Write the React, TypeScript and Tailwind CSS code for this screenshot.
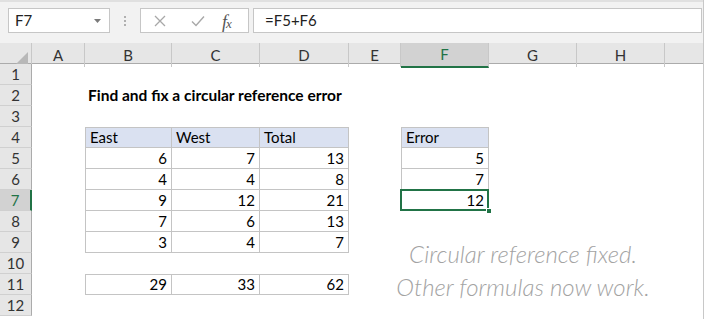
import React from 'react';

const colNames = ['A', 'B', 'C', 'D', 'E', 'F', 'G', 'H', ''];
const gridCols = 'grid grid-cols-[32px_53px_87px_88px_89px_52px_88px_88px_88px_1fr]';

type Cell = { v: string; head?: boolean; num?: boolean; left?: boolean; top?: boolean; sel?: boolean };

// sheet content keyed by row, then column index (0 = A)
const sheet: Record<number, Record<number, Cell>> = {
  4: {
    1: { v: 'East', head: true, left: true, top: true },
    2: { v: 'West', head: true, top: true },
    3: { v: 'Total', head: true, top: true },
    5: { v: 'Error', head: true, left: true, top: true },
  },
  5: { 1: { v: '6', num: true, left: true }, 2: { v: '7', num: true }, 3: { v: '13', num: true }, 5: { v: '5', num: true, left: true } },
  6: { 1: { v: '4', num: true, left: true }, 2: { v: '4', num: true }, 3: { v: '8', num: true }, 5: { v: '7', num: true, left: true } },
  7: { 1: { v: '9', num: true, left: true }, 2: { v: '12', num: true }, 3: { v: '21', num: true }, 5: { v: '12', num: true, left: true, sel: true } },
  8: { 1: { v: '7', num: true, left: true }, 2: { v: '6', num: true }, 3: { v: '13', num: true } },
  9: { 1: { v: '3', num: true, left: true }, 2: { v: '4', num: true }, 3: { v: '7', num: true } },
  11: {
    1: { v: '29', num: true, left: true, top: true },
    2: { v: '33', num: true, top: true },
    3: { v: '62', num: true, top: true },
  },
};

function SheetCell({ cell }: { cell?: Cell }) {
  if (!cell) return <div />;
  return (
    <div
      className={`relative flex items-center px-[4px] border-r border-b border-[#c4c4c4] ${cell.left ? 'border-l' : ''} ${
        cell.top ? 'border-t' : ''
      } ${cell.head ? 'bg-[#dae1f1]' : ''} ${cell.num ? 'justify-end' : ''}`}
    >
      <span className="leading-none">{cell.v}</span>
      {cell.sel && (
        <>
          <div className="absolute -left-[2px] -top-[1px] -right-[1px] -bottom-[1px] border-2 border-[#217346]" />
          <div className="absolute -right-[4px] -bottom-[4px] w-[6px] h-[6px] bg-[#217346] border border-white" />
        </>
      )}
    </div>
  );
}

export default function App() {
  return (
    <main className="relative w-[704px] h-[319px] overflow-hidden bg-white text-[15px] text-black font-['Lato','Liberation_Sans',sans-serif] border-r border-[#c8c8c8]">
      {/* Formula bar */}
      <div className="h-[43px] bg-[#f2f2f2] border-t-2 border-[#e0e0e0] pt-[6px] pl-[8px] flex items-start gap-0">
        <div className="w-[102px] h-[25px] bg-white border border-[#c6c6c6] flex items-center justify-between pl-[6px] pr-[8px]">
          <span className="text-[15px] text-[#222]">F7</span>
          <svg width="7" height="4" viewBox="0 0 7 4"><polygon points="0,0 7,0 3.5,4" fill="#7a7a7a" /></svg>
        </div>
        <div className="w-[30px] h-[25px] flex flex-col items-center justify-center gap-[2px]">
          <span className="w-[2px] h-[2px] bg-[#b0b0b0]" />
          <span className="w-[2px] h-[2px] bg-[#b0b0b0]" />
          <span className="w-[2px] h-[2px] bg-[#b0b0b0]" />
        </div>
        <div className="w-[109px] h-[25px] bg-white border border-[#c6c6c6] flex items-center pl-[13px]">
          <svg width="12" height="12" viewBox="0 0 12 12" className="mr-[25px]">
            <path d="M1 1 L11 11 M11 1 L1 11" stroke="#a8a8a8" strokeWidth="1.3" />
          </svg>
          <svg width="14" height="12" viewBox="0 0 14 12" className="mr-[17px]">
            <path d="M1 6.5 L5 10.5 L13 1.5" stroke="#a8a8a8" strokeWidth="1.4" fill="none" />
          </svg>
          <span className="font-['Liberation_Serif',serif] italic text-[18px] leading-none text-[#555] tracking-[-1px] mt-[2px]">
            f<span className="text-[13px]">x</span>
          </span>
        </div>
        <div className="ml-[4px] flex-1 h-[25px] bg-white border border-[#c6c6c6] flex items-center pl-[11px] mr-[1px]">
          <span className="text-[15px] text-[#222]">=F5+F6</span>
        </div>
      </div>

      {/* Column headers */}
      <div className={`${gridCols} h-[21px] bg-[#e6e6e6] border-b border-[#ababab]`}>
        <div className="flex items-end justify-end pr-[3px] pb-[3px] border-r border-[#c8c8c8]">
          <svg width="12" height="12" viewBox="0 0 12 12"><polygon points="12,0 12,12 0,12" fill="#b8b8b8" /></svg>
        </div>
        {colNames.map((c, i) =>
          c === 'F' ? (
            <div key={i} className="flex items-center justify-center bg-[#d2d2d2] border-b-2 border-[#217346] -mb-px text-[#217346] border-r border-r-[#c8c8c8]">
              {c}
            </div>
          ) : (
            <div key={i} className={`flex items-center justify-center text-[#333] ${i < 8 ? 'border-r border-[#c8c8c8]' : ''}`}>
              {c}
            </div>
          )
        )}
      </div>

      {/* Rows */}
      <div className={`${gridCols} auto-rows-[21px]`}>
        {Array.from({ length: 12 }, (_, r) => r + 1).map((row) => (
          <React.Fragment key={row}>
            {row === 7 ? (
              <div className="flex items-center justify-center bg-[#d2d2d2] border-r-2 border-[#217346] border-b border-b-[#d0d0d0] text-[#217346]">
                {row}
              </div>
            ) : (
              <div className="flex items-center justify-center bg-[#e6e6e6] border-r border-[#ababab] border-b border-b-[#d0d0d0] text-[#333]">
                {row}
              </div>
            )}
            {row === 2 ? (
              <>
                <div />
                <div className="col-span-4 flex items-center pl-[3px] font-bold text-[15.5px] whitespace-nowrap">Find and fix a circular reference error</div>
                <div />
                <div />
                <div />
                <div />
              </>
            ) : (
              colNames.map((_, ci) => <SheetCell key={ci} cell={sheet[row]?.[ci]} />)
            )}
          </React.Fragment>
        ))}
      </div>

      {/* floating text box */}
      <div className="absolute left-[373px] top-[237px] w-[300px] text-center text-[24px] leading-[33px] italic font-light text-[#a3a3a3]">
        <p>Circular reference fixed.</p>
        <p>Other formulas now work.</p>
      </div>
    </main>
  );
}
